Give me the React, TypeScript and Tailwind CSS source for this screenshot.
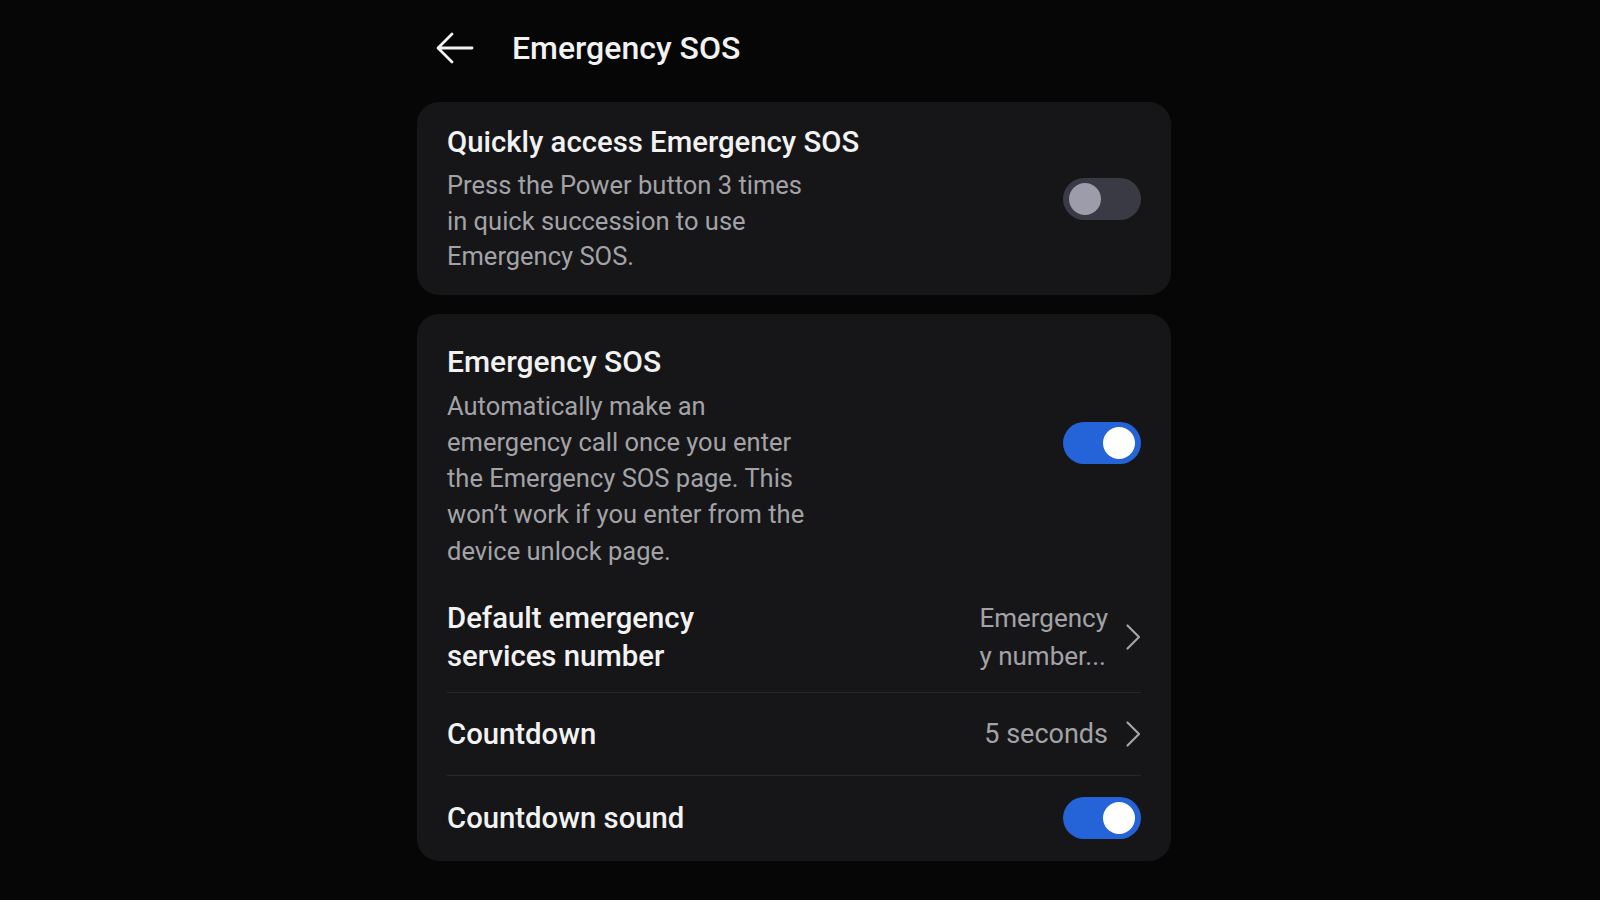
import React, { useState } from 'react';

const font = { fontFamily: 'Roboto, "Noto Sans", "Liberation Sans", sans-serif' };

function Toggle({ on, onClick }: { on: boolean; onClick: () => void }) {
	return (
		<button
			type="button"
			onClick={onClick}
			className={`relative w-[78px] h-[42px] rounded-full shrink-0 flex items-center px-[6px] ${
				on ? 'bg-[#2563d9] justify-end' : 'bg-[#3a3a44] justify-start'
			}`}
		>
			<span
				className={`block w-[32px] h-[32px] rounded-full ${on ? 'bg-white' : 'bg-[#9c9cab]'}`}
			/>
		</button>
	);
}

function Chevron() {
	return (
		<svg width="16" height="28" viewBox="0 0 16 28" fill="none" className="shrink-0">
			<path d="M2.5 2.5 L14 14 L2.5 25.5" stroke="#a4a4a8" strokeWidth="2.2" strokeLinecap="round" strokeLinejoin="round" />
		</svg>
	);
}

export default function App() {
	const [quick, setQuick] = useState(false);
	const [autoCall, setAutoCall] = useState(true);
	const [sound, setSound] = useState(true);

	return (
		<div className="w-[1600px] h-[900px] bg-[#060607] text-[#f2f2f2] overflow-hidden" style={font}>
			<div className="ml-[417px] w-[754px] flex flex-col">
				{/* header */}
				<div className="h-[102px] flex items-center pb-[6px]">
					<button type="button" className="ml-[19px] w-[38px] h-[38px] flex items-center justify-center">
						<svg width="38" height="32" viewBox="0 0 38 32" fill="none">
							<path d="M36 16 H3 M16 2 L2 16 L16 30" stroke="#f2f2f2" strokeWidth="2.8" strokeLinecap="round" strokeLinejoin="round" />
						</svg>
					</button>
					<div className="ml-[38px] text-[32px] font-medium">Emergency SOS</div>
				</div>

				{/* card 1 */}
				<div className="bg-[#161618] rounded-[22px] px-[30px] pt-[22px] pb-[20px] flex items-center justify-between">
					<div className="flex flex-col">
						<div className="text-[29.3px] leading-[36px] font-medium">Quickly access Emergency SOS</div>
						<div className="mt-[8px] text-[25.5px] leading-[35.5px] text-[#a3a3a7]">
							Press the Power button 3 times
							<br />
							in quick succession to use
							<br />
							Emergency SOS.
						</div>
					</div>
					<Toggle on={quick} onClick={() => setQuick(!quick)} />
				</div>

				{/* card 2 */}
				<div className="mt-[19px] bg-[#161618] rounded-[22px] px-[30px] pt-[30px] flex flex-col">
					<div className="flex items-center justify-between">
						<div className="flex flex-col">
							<div className="text-[30px] leading-[36px] font-medium">Emergency SOS</div>
							<div className="mt-[8px] text-[25.5px] leading-[36.25px] text-[#a3a3a7]">
								Automatically make an
								<br />
								emergency call once you enter
								<br />
								the Emergency SOS page. This
								<br />
								won’t work if you enter from the
								<br />
								device unlock page.
							</div>
						</div>
						<div className="mb-[27px]">
							<Toggle on={autoCall} onClick={() => setAutoCall(!autoCall)} />
						</div>
					</div>

					<div className="pt-[30px] pb-[17px] flex items-center justify-between border-b border-[#28282c]">
						<div className="text-[29.3px] leading-[38px] font-medium">
							Default emergency
							<br />
							services number
						</div>
						<div className="flex items-center gap-[17px]">
							<div className="text-[26px] leading-[38px] text-[#a3a3a7]">
								Emergency
								<br />y number...
							</div>
							<Chevron />
						</div>
					</div>

					<div className="py-[23px] flex items-center justify-between border-b border-[#28282c]">
						<div className="text-[29.3px] leading-[36px] font-medium">Countdown</div>
						<div className="flex items-center gap-[17px]">
							<div className="text-[27px] leading-[36px] text-[#a3a3a7]">5 seconds</div>
							<Chevron />
						</div>
					</div>

					<div className="pt-[21px] pb-[22px] flex items-center justify-between">
						<div className="text-[29.3px] leading-[36px] font-medium">Countdown sound</div>
						<Toggle on={sound} onClick={() => setSound(!sound)} />
					</div>
				</div>
			</div>
		</div>
	);
}
